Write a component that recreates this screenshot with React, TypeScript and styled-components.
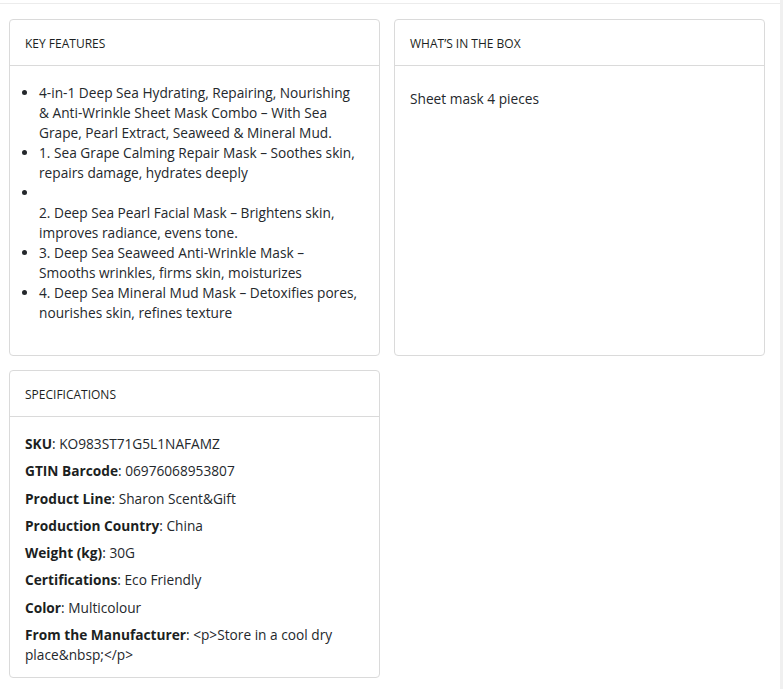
import React from "react";
import styled, { createGlobalStyle } from "styled-components";

const GlobalStyle = createGlobalStyle`
  html, body {
    margin: 0;
    padding: 0;
    background: #ffffff;
  }
  body {
    font-family: "Open Sans", "Noto Sans", sans-serif;
    color: #212529;
  }
`;

const Page = styled.div`
  display: flex;
  width: 783px;
  min-height: 689px;
`;

const Main = styled.main`
  flex: 1;
  padding-top: 3px;
`;

const ScrollStrip = styled.div`
  width: 3px;
  background: #f0f0f0;
`;

const TopRule = styled.div`
  height: 1px;
  background: #ececec;
`;

const Grid = styled.div`
  display: grid;
  grid-template-columns: 371px 371px;
  column-gap: 14px;
  row-gap: 14px;
  padding: 15px 0 0 9px;
  align-items: stretch;
`;

const Card = styled.section`
  border: 1px solid #dadada;
  border-radius: 4px;
  background: #fff;
  display: flex;
  flex-direction: column;
`;

const CardHeader = styled.h3`
  margin: 0;
  padding: 15px 15px 13px;
  line-height: 17px;
  font-size: 12px;
  font-weight: 400;
  text-transform: uppercase;
  color: #1c1f22;
  border-bottom: 1px solid #dadada;
`;

const CardBody = styled.div<{ $top?: number; $bottom?: number }>`
  padding: ${(p) => p.$top ?? 17}px 15px ${(p) => p.$bottom ?? 15}px;
  font-size: 13.7px;
  line-height: 20px;
  color: #24282c;
`;

const FeatureList = styled.ul`
  margin: 0 0 17px;
  padding: 0 4px 0 14px;
  list-style: disc;
`;

const Feature = styled.li`
  padding-left: 0;
`;

const Plain = styled.p`
  margin: 0;
`;

const SpecRow = styled.p`
  margin: 0 0 7.3px;
  &:last-child {
    margin-bottom: 0;
  }
`;

const Label = styled.strong`
  font-weight: 700;
  color: #1c1f22;
`;

const features: React.ReactNode[] = [
  "4-in-1 Deep Sea Hydrating, Repairing, Nourishing & Anti-Wrinkle Sheet Mask Combo – With Sea Grape, Pearl Extract, Seaweed & Mineral Mud.",
  "1. Sea Grape Calming Repair Mask – Soothes skin, repairs damage, hydrates deeply",
  <>
    <br />
    2. Deep Sea Pearl Facial Mask – Brightens skin, improves radiance, evens tone.
  </>,
  "3. Deep Sea Seaweed Anti-Wrinkle Mask – Smooths wrinkles, firms skin, moisturizes",
  "4. Deep Sea Mineral Mud Mask – Detoxifies pores, nourishes skin, refines texture",
];

const specs: [string, string][] = [
  ["SKU", "KO983ST71G5L1NAFAMZ"],
  ["GTIN Barcode", "06976068953807"],
  ["Product Line", "Sharon Scent&Gift"],
  ["Production Country", "China"],
  ["Weight (kg)", "30G"],
  ["Certifications", "Eco Friendly"],
  ["Color", "Multicolour"],
  ["From the Manufacturer", "<p>Store in a cool dry place&nbsp;</p>"],
];

export default function App() {
  return (
    <>
      <GlobalStyle />
      <Page>
        <Main>
          <TopRule />
          <Grid>
            <Card>
              <CardHeader>Key Features</CardHeader>
              <CardBody>
                <FeatureList>
                  {features.map((f, i) => (
                    <Feature key={i}>{f}</Feature>
                  ))}
                </FeatureList>
              </CardBody>
            </Card>
            <Card>
              <CardHeader>What’s in the box</CardHeader>
              <CardBody $top={23}>
                <Plain>Sheet mask 4 pieces</Plain>
              </CardBody>
            </Card>
            <Card>
              <CardHeader>Specifications</CardHeader>
              <CardBody $bottom={12}>
                {specs.map(([k, v]) => (
                  <SpecRow key={k}>
                    <Label>{k}</Label>: {v}
                  </SpecRow>
                ))}
              </CardBody>
            </Card>
          </Grid>
        </Main>
        <ScrollStrip />
      </Page>
    </>
  );
}
